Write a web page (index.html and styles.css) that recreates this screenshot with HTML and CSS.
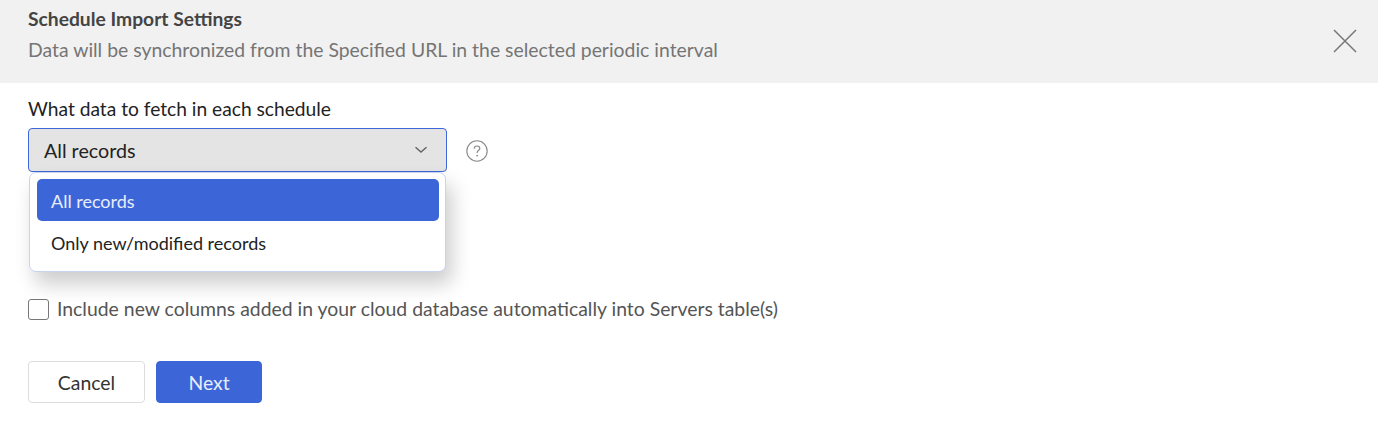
FILE: index.html
```html
<!DOCTYPE html>
<html lang="en">
<head>
  <meta charset="UTF-8" />
  <title>Schedule Import Settings</title>
  <link rel="stylesheet" href="styles.css">
</head>
<body>
  <div class="header">
    <div>
      <h2>Schedule Import Settings</h2>
      <p>Data will be synchronized from the Specified URL in the selected periodic interval</p>
    </div>
    <svg class="close" width="26" height="26" viewBox="0 0 26 26">
      <path d="M2 2L24 24M24 2L2 24" stroke="#777" stroke-width="1.5" fill="none" />
    </svg>
  </div>

  <div class="content">
    <label class="field-label">What data to fetch in each schedule</label>
    <div class="field-row">
      <div class="select-wrap">
        <div class="select">
          <span>All records</span>
          <svg width="14" height="8" viewBox="0 0 14 8">
            <path d="M1.5 1.2L7 6L12.5 1.2" stroke="#666" stroke-width="1.5" fill="none" />
          </svg>
        </div>
        <!-- open dropdown -->
        <ul class="menu">
          <li class="active">All records</li>
          <li>Only new/modified records</li>
        </ul>
      </div>
      <svg class="help" width="24" height="24" viewBox="0 0 24 24">
        <circle cx="12" cy="12" r="10.2" stroke="#888" stroke-width="1.1" fill="none" />
        <path d="M9.2 9.6C9.3 7.9 10.5 7 12 7C13.6 7 14.8 8 14.8 9.4C14.8 11.3 12.1 11.4 12.1 13.9" stroke="#888" stroke-width="1.2" fill="none" />
        <circle cx="12.1" cy="16.6" r="0.9" fill="#888" />
      </svg>
    </div>

    <label class="check-row">
      <span class="checkbox"></span>
      Include new columns added in your cloud database automatically into Servers table(s)
    </label>

    <div class="actions">
      <button type="button" class="btn">Cancel</button>
      <button type="button" class="btn btn-primary">Next</button>
    </div>
  </div>
</body>
</html>
```

FILE: styles.css
```css
* {
  margin: 0;
  padding: 0;
  box-sizing: border-box;
  font-family: Lato, "Open Sans", sans-serif;
}

body {
  background-color: white;
  height: 426px;
  overflow: hidden;
  font-size: 19.4px;
  color: #222;
}

.header {
  background-color: #f1f1f1;
  height: 83px;
  padding: 7px 20px 0 28px;
  display: flex;
  justify-content: space-between;
}

.header h2 {
  font-size: 19.25px;
  font-weight: 700;
  line-height: 24px;
  color: #444;
}

.header p {
  line-height: 24px;
  margin-top: 7px;
  color: #757575;
}

.close {
  margin-top: 21px;
}

.content {
  padding: 14px 28px 0;
}

.field-label {
  display: block;
  font-size: 19.2px;
  line-height: 24px;
  color: #222;
}

.field-row {
  display: flex;
  align-items: center;
  gap: 18px;
  margin-top: 7px;
}

.select-wrap {
  position: relative;
  width: 419px;
}

.select {
  height: 44px;
  padding: 0 18px 0 15px;
  display: flex;
  justify-content: space-between;
  align-items: center;
  background-color: #e4e4e4;
  border: 1px solid #3e68d8;
  border-radius: 4px;
  font-size: 19.7px;
}

.help {
  margin-top: 2px;
}

.menu {
  position: absolute;
  top: 44px;
  left: 1px;
  right: 1px;
  height: 100px;
  padding: 6px 6.5px;
  list-style: none;
  background-color: white;
  border: 1px solid #c8d2f1;
  border-radius: 7px;
  box-shadow: 6px 12px 20px rgba(0,0,0,0.2);
  font-size: 18px;
}

.menu li {
  height: 42px;
  line-height: 44px;
  padding: 0 14.5px;
  border-radius: 5px;
}

.menu li.active {
  background-color: #3c66d8;
  color: #e8edfb;
}

.check-row {
  display: flex;
  align-items: center;
  gap: 8px;
  margin-top: 125px;
  line-height: 24px;
  color: #555;
}

.checkbox {
  width: 21px;
  height: 21px;
  background: white;
  border: 1px solid #777;
  border-radius: 3px;
}

.actions {
  display: flex;
  gap: 11px;
  margin-top: 40px;
}

.btn {
  width: 117px;
  height: 42px;
  background-color: white;
  border: 1px solid #ddd;
  border-radius: 4px;
  font-size: 19.4px;
  color: #333;
  cursor: pointer;
}

.btn-primary {
  width: 106px;
  background-color: #3c66d8;
  border-color: #3c66d8;
  color: #e8edfb;
}
```
